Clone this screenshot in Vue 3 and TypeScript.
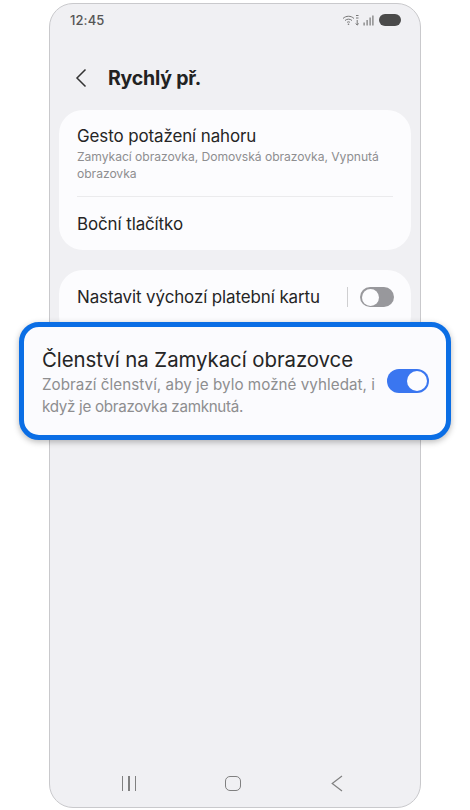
<script setup lang="ts">
const bars = [0, 1, 2]
</script>

<template>
  <div class="page">
    <div class="phone">
      <div class="status">
        <span class="time">12:45</span>
        <div class="status-icons">
          <svg width="20" height="12" viewBox="0 0 20 12" fill="none" stroke="#777" stroke-width="1">
            <path d="M1 4.5C4 1.5 9 1.5 12 4.5M3 6.5C5 4.7 8 4.7 10 6.5M5 8.5C6 7.6 7 7.6 8 8.5" />
            <circle cx="6.5" cy="10.2" r="0.8" fill="#777" stroke="none" />
            <path d="M14 1.5H16.5M14 4H16.5M15.2 6V11M13.6 9.5L15.2 11L16.8 9.5" stroke-width="1" />
          </svg>
          <svg width="11" height="11" viewBox="0 0 11 11" fill="#777">
            <rect x="0.5" y="7.5" width="1.2" height="3" />
            <rect x="3.5" y="5" width="1.2" height="5.5" />
            <rect x="6.5" y="2.5" width="1.2" height="8" />
            <rect x="9.3" y="0.5" width="1.2" height="10" />
          </svg>
          <span class="battery"></span>
        </div>
      </div>

      <header class="title-bar">
        <svg class="back" width="12" height="20" viewBox="0 0 12 20" fill="none" stroke="#333" stroke-width="1.5">
          <path d="M10.5 1.5L2 10L10.5 18.5" />
        </svg>
        <h1>Rychlý př.</h1>
      </header>

      <section class="card first">
        <div class="row-top">
          <div class="label">Gesto potažení nahoru</div>
          <div class="sub">Zamykací obrazovka, Domovská obrazovka, Vypnutá obrazovka</div>
        </div>
        <div class="divider"></div>
        <div class="label side">Boční tlačítko</div>
      </section>

      <section class="card second">
        <div class="label">Nastavit výchozí platební kartu</div>
        <span class="vline"></span>
        <span class="toggle off"><i></i></span>
      </section>

      <div class="spacer"></div>

      <nav class="nav">
        <div class="recent">
          <span v-for="b in bars" :key="b"></span>
        </div>
        <span class="home"></span>
        <svg width="12" height="17" viewBox="0 0 12 17" fill="none" stroke="#808080" stroke-width="1.2">
          <path d="M11 1L1.2 8.5L11 16" />
        </svg>
      </nav>
    </div>

    <div class="callout">
      <div class="callout-text">
        <div class="callout-title">Členství na Zamykací obrazovce</div>
        <div class="callout-sub">
          <span class="line-one">Zobrazí členství, aby je bylo možné vyhledat, i</span>
          <span class="line-two">když je obrazovka zamknutá.</span>
        </div>
      </div>
      <span class="toggle on"><i></i></span>
    </div>
  </div>
</template>

<style>
html, body { margin: 0; background: #fff; }
</style>

<style scoped>
.page {
  position: relative;
  width: 470px;
  height: 810px;
  overflow: hidden;
  background: #fff;
  font-family: Inter, "Noto Sans", sans-serif;
  color: #252525;
}
.phone {
  box-sizing: border-box;
  width: 372px;
  height: 805px;
  margin: 3px 0 0 49px;
  display: flex;
  flex-direction: column;
  background: #f0f0f3;
  border: 1px solid #c9c9cc;
  border-radius: 24px;
}
.status {
  display: flex;
  justify-content: space-between;
  align-items: center;
  height: 18px;
  margin-top: 7px;
  padding: 0 19px 0 20px;
}
.time { font-size: 13px; font-weight: 500; color: #555; letter-spacing: 0.1px; }
.status-icons { display: flex; align-items: center; gap: 1px; }
.battery {
  width: 22px;
  height: 12px;
  margin-left: 4px;
  border-radius: 6px;
  background: #4a4a4a;
}
.title-bar {
  display: flex;
  align-items: center;
  height: 30px;
  margin-top: 34px;
  padding-left: 25px;
}
.back { flex: none; }
h1 {
  margin: 0 0 0 21px;
  font-size: 19.5px;
  font-weight: 700;
  letter-spacing: -0.2px;
  color: #222;
}
.card {
  margin: 0 9px;
  background: #fcfcfe;
  border-radius: 24px;
}
.first {
  margin-top: 17px;
  height: 140px;
  box-sizing: border-box;
  padding: 16px 18px 0 18px;
  display: flex;
  flex-direction: column;
}
.label { font-size: 16.95px; line-height: 20px; color: #252525; letter-spacing: -0.1px; }
.sub { margin-top: 2px; font-size: 12.15px; line-height: 17px; color: #8e8e90; letter-spacing: -0.05px; }
.divider { height: 1px; margin: 14px 0 0 0; background: #ebebed; }
.side { margin-top: 17px; }
.second {
  margin-top: 20px;
  height: 70px;
  box-sizing: border-box;
  padding: 17px 17px 0 18px;
  display: flex;
  align-items: flex-start;
}
.vline { width: 1px; height: 20px; margin: 0 12px 0 auto; background: #cfcfd1; }
.toggle {
  position: relative;
  display: block;
  flex: none;
  box-sizing: border-box;
  border-radius: 12px;
}
.toggle i { position: absolute; display: block; border-radius: 50%; background: #fff; box-sizing: border-box; }
.off { width: 34px; height: 20px; background: #98989c; }
.off i { left: 1.5px; top: 1.5px; width: 17px; height: 17px; background: #fcfcfe; }
.spacer { flex: 1; }
.nav {
  display: flex;
  align-items: center;
  justify-content: space-between;
  height: 20px;
  margin-bottom: 14px;
  padding: 0 77px 0 72px;
}
.recent { display: flex; gap: 5px; }
.recent span { width: 1.3px; height: 15px; background: #808080; }
.home {
  width: 14px;
  height: 13px;
  border: 1.3px solid #808080;
  border-radius: 5px;
}
.callout {
  position: absolute;
  left: 19px;
  top: 322px;
  box-sizing: border-box;
  width: 432px;
  height: 118px;
  padding: 0 17px 0 18px;
  display: flex;
  align-items: center;
  justify-content: space-between;
  background: #fbfbfe;
  border: 5px solid #0b6ee5;
  border-radius: 20px;
  box-shadow: 0 2px 6px rgba(0, 0, 0, 0.28);
}
.callout-text { width: 335px; padding-top: 3px; }
.callout-title { font-size: 20.4px; line-height: 26px; color: #252525; white-space: nowrap; letter-spacing: -0.05px; }
.callout-sub { margin-top: 1px; font-size: 15.2px; line-height: 22px; color: #8e8e90; }
.line-one, .line-two { display: block; white-space: nowrap; }
.line-one { letter-spacing: 0.04px; }
.line-two { letter-spacing: -0.3px; }
.on { width: 42px; height: 24px; background: #3a76f0; }
.on i { right: 2px; top: 2px; width: 20px; height: 20px; background: #fcfcff; }
</style>
